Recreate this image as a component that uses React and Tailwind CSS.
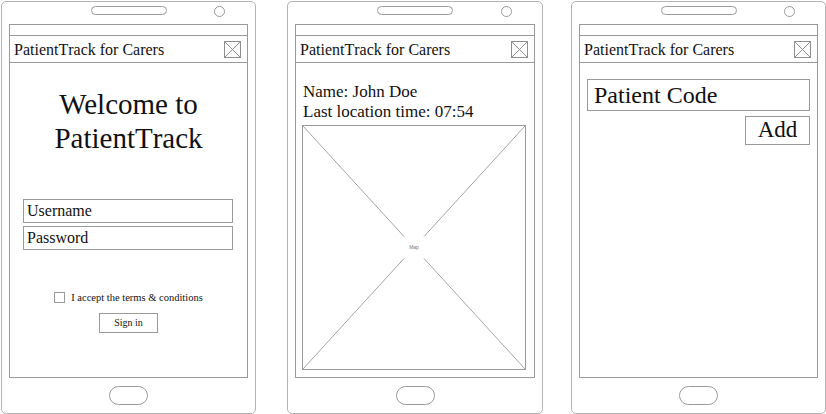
import React from "react";

const serif = { fontFamily: '"Liberation Serif", "Times New Roman", serif' };

// close box in title bar
const CloseBox = () => (
  <svg width="17" height="17" viewBox="0 0 17 17" className="shrink-0">
    <rect x="0.5" y="0.5" width="16" height="16" fill="none" stroke="#8f8f8f" />
    <line x1="1" y1="1" x2="16" y2="16" stroke="#8f8f8f" />
    <line x1="16" y1="1" x2="1" y2="16" stroke="#8f8f8f" />
  </svg>
);

const Phone = ({ className, children }) => {
  return (
    <div
      className={`relative flex flex-col h-[413px] mt-[1px] border border-[#b3b3b3] rounded-[5px] bg-white ${className}`}
    >
      {/* top: speaker + camera */}
      <div className="h-[22px] shrink-0 flex justify-center pt-[4px]">
        <div className="w-[76px] h-[9px] rounded-full border border-[#9a9a9a]" />
      </div>
      <div className="absolute top-[4px] right-[30px] w-[11px] h-[11px] rounded-full border border-[#9a9a9a]" />

      {/* screen */}
      <div className="mx-[7px] h-[354px] shrink-0 flex flex-col border border-[#9a9a9a]">
        <div className="h-[11px] shrink-0 border-b border-[#9a9a9a]" />
        <div className="h-[27px] shrink-0 flex items-center justify-between pl-[4px] pr-[6px] border-b border-[#9a9a9a]">
          <span className="text-[16px] leading-none text-[#111] pt-[1px] [font-kerning:none]" style={serif}>
            PatientTrack for Carers
          </span>
          <CloseBox />
        </div>
        {children}
      </div>

      {/* home button */}
      <div className="flex justify-center pt-[8px]">
        <div className="w-[39px] h-[19px] rounded-full border border-[#9a9a9a]" />
      </div>
    </div>
  );
};

const MapBox = () => {
  const w = 224;
  const h = 245;
  const cx = w / 2;
  const cy = h / 2;
  return (
    <div className="relative mx-[6px] w-[224px] h-[245px] border border-[#9a9a9a]">
      <svg width={w} height={h} className="absolute inset-0 -m-[1px]">
        <line x1="1" y1="1" x2={cx - 10} y2={cy - 11} stroke="#a6a6a6" />
        <line x1={w - 1} y1="1" x2={cx + 10} y2={cy - 11} stroke="#a6a6a6" />
        <line x1="1" y1={h - 1} x2={cx - 10} y2={cy + 11} stroke="#a6a6a6" />
        <line x1={w - 1} y1={h - 1} x2={cx + 10} y2={cy + 11} stroke="#a6a6a6" />
      </svg>
      <div className="absolute inset-0 flex items-center justify-center">
        <span className="text-[5px] leading-none text-[#777]" style={{ fontFamily: '"Liberation Sans", Arial, sans-serif' }}>
          Map
        </span>
      </div>
    </div>
  );
};

export default function App() {
  return (
    <div className="w-[826px] h-[414px] bg-white flex overflow-hidden" style={serif}>
      {/* Login */}
      <Phone className="ml-[1px] w-[255px]">
        <div className="flex flex-col items-center pt-[24px] text-[#111]">
          <h1 className="text-[29px] leading-[34px] text-center font-normal">
            Welcome to
            <br />
            <span className="[font-kerning:none]">PatientTrack</span>
          </h1>
        </div>
        <div className="flex flex-col gap-[3px] pl-[13px] pr-[14px] mt-[44px]">
          <div className="h-[24px] border border-[#9a9a9a] flex items-center px-[3px] text-[16px] text-[#111]">
            Username
          </div>
          <div className="h-[24px] border border-[#9a9a9a] flex items-center px-[3px] text-[16px] text-[#111]">
            Password
          </div>
        </div>
        <div className="flex items-center justify-center gap-[6px] mt-[40px] text-[10.5px] text-[#111]">
          <div className="w-[11px] h-[11px] border border-[#9a9a9a]" />
          <span>I accept the terms &amp; conditions</span>
        </div>
        <div className="flex justify-center mt-[7px]">
          <div className="w-[59px] h-[20px] border border-[#9a9a9a] flex items-center justify-center text-[10px] text-[#111]">
            Sign in
          </div>
        </div>
      </Phone>

      {/* Patient location */}
      <Phone className="ml-[31px] w-[256px]">
        <div className="pl-[7px] pt-[19px] text-[17px] leading-[20px] text-[#111]">
          <div>Name: John Doe</div>
          <div>Last location time: 07:54</div>
        </div>
        <div className="mt-[3px]">
          <MapBox />
        </div>
      </Phone>

      {/* Add patient */}
      <Phone className="ml-[28px] w-[255px]">
        <div className="flex flex-col px-[7px] pt-[16px]">
          <div className="h-[32px] border border-[#9a9a9a] flex items-center px-[6px] text-[24px] text-[#111]">
            Patient Code
          </div>
          <div className="flex justify-end mt-[5px]">
            <div className="w-[65px] h-[29px] border border-[#9a9a9a] flex items-center justify-center text-[23px] text-[#111]">
              Add
            </div>
          </div>
        </div>
      </Phone>
    </div>
  );
}
